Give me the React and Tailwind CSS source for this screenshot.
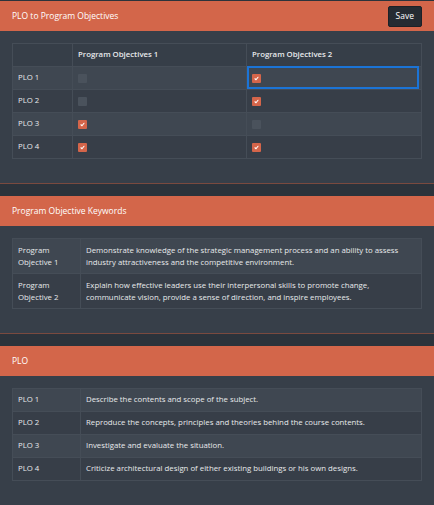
import React from 'react';

const matrix = [
  { plo: 'PLO 1', a: false, b: true },
  { plo: 'PLO 2', a: false, b: true },
  { plo: 'PLO 3', a: true, b: false },
  { plo: 'PLO 4', a: true, b: true },
];

const objectives = [
  {
    name: 'Program Objective 1',
    text: 'Demonstrate knowledge of the strategic management process and an ability to assess industry attractiveness and the competitive environment.',
  },
  {
    name: 'Program Objective 2',
    text: 'Explain how effective leaders use their interpersonal skills to promote change, communicate vision, provide a sense of direction, and inspire employees.',
  },
];

const plos = [
  { name: 'PLO 1', text: 'Describe the contents and scope of the subject.' },
  { name: 'PLO 2', text: 'Reproduce the concepts, principles and theories behind the course contents.' },
  { name: 'PLO 3', text: 'Investigate and evaluate the situation.' },
  { name: 'PLO 4', text: 'Criticize architectural design of either existing buildings or his own designs.' },
];

function Check({ on }) {
  if (!on) {
    return <span className="block w-[9px] h-[9px] rounded-[1px] bg-[#4a525c]" />;
  }
  return (
    <span className="flex items-center justify-center w-[9px] h-[9px] rounded-[1px] bg-[#d4654a]">
      <svg className="w-[5px] h-[5px]" viewBox="0 0 10 10" fill="none">
        <path d="M2 5.5l2 2 4-5" stroke="white" strokeWidth="2.2" strokeLinecap="round" strokeLinejoin="round" />
      </svg>
    </span>
  );
}

function Panel({ title, action, children }) {
  return (
    <section className="bg-[#373f49] border-b border-[#7a4a3f]">
      <header className="bg-[#d3664a] flex items-center justify-between pl-3 pr-3 h-[30px]">
        <h2 className="text-[8.5px] text-white">{title}</h2>
        {action}
      </header>
      <div className="pt-3 pb-6 px-3">{children}</div>
    </section>
  );
}

export default function App() {
  return (
    <div
      className="min-h-screen bg-[#2c333b] text-[7.8px] text-[#e8eaec] flex flex-col gap-[12px] pt-px"
      style={{ fontFamily: '"Open Sans", "Noto Sans", sans-serif' }}
    >
      <Panel
        title="PLO to Program Objectives"
        action={
          <button className="bg-[#252b32] border border-[#1c2127] rounded-[2px] text-white text-[8.5px] px-[7px] h-[21px]">
            Save
          </button>
        }
      >
        <table className="w-full border-collapse table-fixed">
          <colgroup>
            <col className="w-[60px]" />
            <col className="w-[174px]" />
            <col />
          </colgroup>
          <thead>
            <tr className="h-[23px] bg-[#363e48]">
              <th className="border border-[#454d57]" />
              <th className="border border-[#454d57] text-left font-semibold px-[5px]">Program Objectives 1</th>
              <th className="border border-[#454d57] text-left font-semibold px-[5px]">Program Objectives 2</th>
            </tr>
          </thead>
          <tbody>
            {matrix.map((r, i) => (
              <tr key={r.plo} className={`h-[23px] ${i % 2 === 0 ? 'bg-[#3f4751]' : 'bg-[#373e48]'}`}>
                <td className="border border-[#454d57] px-[5px]">{r.plo}</td>
                <td className="border border-[#454d57] px-[5px]">
                  <Check on={r.a} />
                </td>
                <td className="border border-[#454d57] px-[5px] relative">
                  <Check on={r.b} />
                  {i === 0 && (
                    <span className="absolute left-0 top-[-1px] right-[2px] bottom-0 border-2 border-[#1b74d6]" />
                  )}
                </td>
              </tr>
            ))}
          </tbody>
        </table>
      </Panel>

      <Panel title="Program Objective Keywords">
        <table className="w-full border-collapse table-fixed">
          <colgroup>
            <col className="w-[68px]" />
            <col />
          </colgroup>
          <tbody>
            {objectives.map((o, i) => (
              <tr key={o.name} className={i % 2 === 0 ? 'bg-[#3f4751]' : 'bg-[#373e48]'}>
                <td className="border border-[#454d57] px-[5px] py-[5px] leading-[12px] align-top">{o.name}</td>
                <td className="border border-[#454d57] px-[5px] py-[5px] leading-[12px] align-top">{o.text}</td>
              </tr>
            ))}
          </tbody>
        </table>
      </Panel>

      <Panel title="PLO">
        <table className="w-full border-collapse table-fixed">
          <colgroup>
            <col className="w-[68px]" />
            <col />
          </colgroup>
          <tbody>
            {plos.map((p, i) => (
              <tr key={p.name} className={`h-[23px] ${i % 2 === 0 ? 'bg-[#3f4751]' : 'bg-[#373e48]'}`}>
                <td className="border border-[#454d57] px-[5px]">{p.name}</td>
                <td className="border border-[#454d57] px-[5px]">{p.text}</td>
              </tr>
            ))}
          </tbody>
        </table>
      </Panel>
    </div>
  );
}
